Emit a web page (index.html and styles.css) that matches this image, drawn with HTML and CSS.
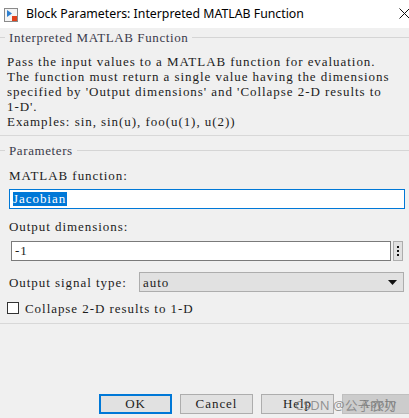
FILE: index.html
```html
<!DOCTYPE html>
<html>
<head>
<meta charset="utf-8">
<link rel="stylesheet" href="styles.css">
</head>
<body>
<div class="window">
  <div class="titlebar">
    <svg class="app-icon" width="14" height="14" viewBox="0 0 14 14">
      <rect x="0.5" y="0.5" width="13" height="13" fill="#f4f4f4" stroke="#8a8a8a"/>
      <path d="M3 2 L3 9 L8 5.5 Z" fill="#2d7fd0"/>
      <rect x="8" y="8" width="5" height="5" fill="#e0401a"/>
    </svg>
    <span class="title">Block Parameters: Interpreted MATLAB Function</span>
    <svg class="close" width="11" height="11" viewBox="0 0 11 11">
      <path d="M0.5 0.5 L10.5 10.5 M10.5 0.5 L0.5 10.5" stroke="#111" stroke-width="1"/>
    </svg>
  </div>

  <div class="group group-desc">
    <div class="group-head"><span>Interpreted MATLAB Function</span></div>
    <div class="desc">Pass the input values to a MATLAB function for evaluation.<br>The function must return a single value having the dimensions<br>specified by 'Output dimensions' and 'Collapse 2-D results to<br>1-D'.<br>Examples: sin, sin(u), foo(u(1), u(2))</div>
  </div>

  <div class="group group-params">
    <div class="group-head"><span>Parameters</span></div>
    <div class="label label-first">MATLAB function:</div>
    <div class="field field-focus"><span class="sel">Jacobian</span></div>
    <div class="label label-second">Output dimensions:</div>
    <div class="field-row">
      <div class="field field-dims">-1</div>
      <div class="dots"><i></i><i></i><i></i></div>
    </div>
    <div class="select-row">
      <span class="select-label">Output signal type:</span>
      <div class="select"><span>auto</span><svg width="9" height="5" viewBox="0 0 9 5"><path d="M0 0 H9 L4.5 5 Z" fill="#111"/></svg></div>
    </div>
    <div class="check-row">
      <span class="check"></span>
      <span>Collapse 2-D results to 1-D</span>
    </div>
  </div>

  <div class="buttons">
    <div class="btn btn-default">OK</div>
    <div class="btn">Cancel</div>
    <div class="btn">Help</div>
    <div class="btn btn-disabled">Apply</div>
  </div>
  <div class="watermark">CSDN @公子衣刃</div>
</div>
</body>
</html>
```

FILE: styles.css
```css
html, body {
  margin: 0;
  padding: 0;
  background: #f0f0f0;
}
.window {
  position: relative;
  width: 409px;
  height: 418px;
  overflow: hidden;
  display: flex;
  flex-direction: column;
  background: #f0f0f0;
  font-family: "Liberation Serif", "Noto Sans CJK SC", serif;
  font-size: 13px;
  letter-spacing: 0.95px;
  line-height: 15px;
  color: #1c1c1c;
}
.titlebar {
  height: 28px;
  flex: none;
  background: #ffffff;
  display: flex;
  align-items: center;
  font-family: "Noto Sans", "Open Sans", sans-serif;
  letter-spacing: 0;
  font-size: 12.3px;
  color: #000;
}
.app-icon {
  margin-left: 4px;
  margin-top: 1px;
}
.title {
  margin-left: 8px;
  margin-top: -2px;
}
.close {
  margin-left: auto;
  margin-top: -2px;
  position: relative;
  left: 1px;
}
.group {
  border-bottom: 1px solid #d8d8d8;
  flex: none;
}
.group-head {
  display: flex;
  align-items: center;
  height: 15px;
  color: #3a3a4a;
  letter-spacing: 0.6px;
}
.group-head::before {
  content: "";
  width: 5px;
  border-top: 1px solid #d5d5d5;
}
.group-head::after {
  content: "";
  flex: 1;
  margin-left: 4px;
  border-top: 1px solid #d5d5d5;
}
.group-head span {
  padding-left: 4px;
}
.group-desc {
  padding-top: 2px;
  padding-bottom: 6px;
}
.desc {
  margin-top: 9px;
  padding-left: 7px;
  white-space: nowrap;
}
.group-params {
  padding-top: 7px;
  padding-bottom: 9px;
}
.label {
  padding-left: 9px;
}
.label-first {
  margin-top: 10px;
}
.label-second {
  margin-top: 10px;
}
.field {
  box-sizing: border-box;
  height: 20px;
  background: #fff;
  border: 1px solid #7a7a7a;
  line-height: 17px;
  padding-left: 3px;
  white-space: nowrap;
}
.field-focus {
  margin: 6px 0 0 9px;
  width: 396px;
  border-color: #0078d7;
}
.sel {
  background: #0078d7;
  color: #fff;
  display: inline-block;
  line-height: 14px;
  padding-right: 1px;
}
.field-row {
  display: flex;
  align-items: stretch;
  margin: 7px 0 0 11px;
}
.field-dims {
  width: 380px;
}
.dots {
  box-sizing: border-box;
  width: 10px;
  height: 20px;
  margin-left: 2px;
  border: 1px solid #adadad;
  background: #e1e1e1;
  display: flex;
  flex-direction: column;
  align-items: center;
  justify-content: center;
  gap: 2px;
}
.dots i {
  display: block;
  width: 2px;
  height: 2px;
  background: #111;
}
.select-row {
  display: flex;
  align-items: center;
  margin-top: 11px;
  padding-left: 9px;
}
.select-label {
  width: 130px;
  white-space: nowrap;
}
.select {
  box-sizing: border-box;
  width: 265px;
  height: 20px;
  border: 1px solid #adadad;
  background: #e1e1e1;
  display: flex;
  align-items: center;
  justify-content: space-between;
  padding: 0 6px 0 3px;
}
.select span {
  margin-top: 1px;
}
.check-row {
  display: flex;
  align-items: center;
  margin-top: 10px;
  padding-left: 7px;
  height: 12px;
}
.check {
  box-sizing: border-box;
  width: 12px;
  height: 12px;
  border: 1px solid #333;
  background: #fff;
  margin-right: 6px;
}
.buttons {
  margin-top: auto;
  margin-bottom: 4px;
  padding-left: 99px;
  display: flex;
  gap: 8px;
  flex: none;
}
.btn {
  box-sizing: border-box;
  flex: none;
  width: 73px;
  height: 20px;
  border: 1px solid #adadad;
  background: #e1e1e1;
  text-align: center;
  line-height: 18px;
}
.btn-default {
  border: 2px solid #0078d7;
  line-height: 16px;
}
.btn-disabled {
  background: #cccccc;
  border-color: #bfbfbf;
  color: #838383;
}
.watermark {
  position: absolute;
  left: 295px;
  top: 397px;
  font-family: "Noto Sans", "Noto Sans CJK SC", sans-serif;
  font-size: 13px;
  letter-spacing: 0;
  line-height: 16px;
  color: rgba(120, 120, 120, 0.75);
}
```
